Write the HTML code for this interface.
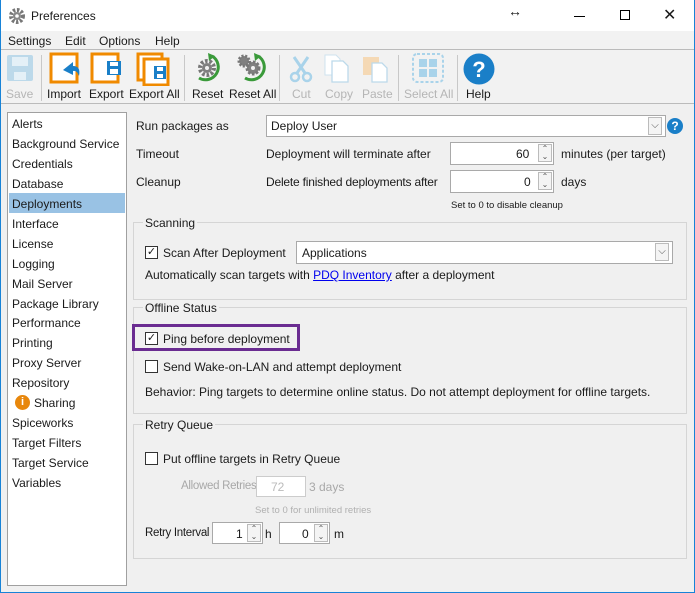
<!DOCTYPE html>
<html><head><meta charset="utf-8"><style>
*{margin:0;padding:0;box-sizing:border-box}
body{width:695px;height:593px;overflow:hidden;background:#f0f0f0;font:12px "Liberation Sans",sans-serif;color:#1a1a1a;position:relative}
.a{position:absolute;white-space:nowrap}
.win{position:absolute;left:0;top:0;width:695px;height:593px;border:1px solid #1883d7;border-top:none}
.tb{font-size:12px;text-align:center}
.dis{color:#b5b5b5}
.box{position:absolute;background:#fff;border:1px solid #a9a9a9}
.spin{position:absolute;width:14px;height:18px;border:1px solid #bbb;background:#f4f4f4;font-size:8px;line-height:8px;text-align:center;color:#555}
.cb{position:absolute;width:13px;height:13px;border:1px solid #333;background:#fff;font-size:11px;line-height:11px;text-align:center}
.grp{position:absolute;border:1px solid #d5d5d5}
.gl{position:absolute;background:#f0f0f0;padding:0 2px;top:-9px;left:9px}
.li{position:absolute;left:12px}
.sep{position:absolute;top:55px;width:1px;height:46px;background:#c8c8c8}
</style></head><body>
<div class="a" style="left:0;top:0;width:695px;height:31px;background:#fff"></div>
<svg class="a" style="left:8px;top:7px" width="18" height="18" viewBox="0 0 18 18"><circle cx="9" cy="9" r="6" fill="none" stroke="#777" stroke-width="4" stroke-dasharray="2.4 1.6"/><circle cx="9" cy="9" r="4" fill="#888"/><circle cx="9" cy="9" r="1.8" fill="#fff"/></svg>
<div class="a" style="left:31px;top:9px;font-size:12px">Preferences</div>
<div class="a" style="left:508px;top:3px;font-size:14px;font-weight:bold">↔</div>
<div class="a" style="left:574px;top:16px;width:11px;height:1px;background:#000"></div>
<div class="a" style="left:620px;top:10px;width:10px;height:10px;border:1px solid #000"></div>
<div class="a" style="left:663px;top:5px;font-size:16px">✕</div>
<div class="a" style="left:0;top:31px;width:695px;height:18px;background:#f2f2f2"></div>
<div class="a" style="left:8px;top:34px">Settings</div><div class="a" style="left:65px;top:34px">Edit</div><div class="a" style="left:99px;top:34px">Options</div><div class="a" style="left:155px;top:34px">Help</div>
<div class="a" style="left:0;top:49px;width:695px;height:1px;background:#bbb"></div>
<div class="a" style="left:0;top:103px;width:695px;height:1px;background:#bbb"></div>
<div class="a" style="left:0;top:50px;width:695px;height:53px;background:#f2f2f2"></div>
<svg class="a" style="left:6px;top:54px" width="28" height="28"><rect x="1" y="1" width="26" height="26" rx="2" fill="#bcd9ea"/><rect x="6" y="3" width="16" height="9" fill="#e4f0f7"/><rect x="8" y="18" width="12" height="8" fill="#e4f0f7"/></svg>
<div class="a tb dis" style="left:6px;top:87px">Save</div>
<div class="sep" style="left:41px"></div>
<svg class="a" style="left:49px;top:52px" width="34" height="32"><rect x="2" y="2" width="26" height="28" fill="#fff" stroke="#f08a00" stroke-width="3"/><path d="M14 18 L24 10 L24 14 Q32 14 30 24 Q28 18 24 19 L24 23 Z" fill="#1a7fc8"/></svg>
<div class="a tb" style="left:47px;top:87px">Import</div>
<svg class="a" style="left:90px;top:52px" width="34" height="32"><rect x="2" y="2" width="26" height="28" fill="#fff" stroke="#f08a00" stroke-width="3"/><rect x="17" y="9" width="14" height="14" fill="#1a7fc8"/><rect x="20" y="10" width="8" height="4" fill="#fff"/><rect x="20" y="17" width="8" height="5" fill="#fff"/></svg>
<div class="a tb" style="left:89px;top:87px">Export</div>
<svg class="a" style="left:136px;top:52px" width="36" height="34"><rect x="2" y="2" width="24" height="26" fill="#fff" stroke="#f08a00" stroke-width="3"/><rect x="8" y="7" width="24" height="26" fill="#fff" stroke="#f08a00" stroke-width="3"/><rect x="18" y="14" width="12" height="13" fill="#1a7fc8"/><rect x="21" y="15" width="6" height="4" fill="#fff"/><rect x="21" y="22" width="6" height="4" fill="#fff"/></svg>
<div class="a tb" style="left:129px;top:87px">Export All</div>
<div class="sep" style="left:184px"></div>
<svg class="a" style="left:194px;top:53px" width="28" height="30"><path d="M18 3 A12 12 0 1 1 5 25" fill="none" stroke="#3a9a3a" stroke-width="3"/><path d="M14 0 L21 3 L15 8 Z" fill="#3a9a3a"/><circle cx="13" cy="15" r="7" fill="none" stroke="#777" stroke-width="4" stroke-dasharray="2.6 1.8"/><circle cx="13" cy="15" r="5" fill="#808080"/><circle cx="13" cy="15" r="2" fill="#f2f2f2"/></svg>
<div class="a tb" style="left:192px;top:87px">Reset</div>
<svg class="a" style="left:234px;top:51px" width="36" height="32"><path d="M24 5 A12 12 0 1 1 11 27" fill="none" stroke="#3a9a3a" stroke-width="3"/><path d="M20 2 L27 5 L21 10 Z" fill="#3a9a3a"/><circle cx="10" cy="10" r="5" fill="#808080" stroke="#777" stroke-width="3" stroke-dasharray="2 1.5"/><circle cx="19" cy="17" r="6" fill="#808080" stroke="#777" stroke-width="3" stroke-dasharray="2.4 1.6"/><circle cx="19" cy="17" r="2" fill="#f2f2f2"/></svg>
<div class="a tb" style="left:229px;top:87px">Reset All</div>
<div class="sep" style="left:279px"></div>
<svg class="a" style="left:289px;top:55px" width="24" height="28"><path d="M5 2 L16 18 M19 2 L8 18" stroke="#a9d3ea" stroke-width="3"/><circle cx="6" cy="22" r="4" fill="none" stroke="#a9d3ea" stroke-width="2.5"/><circle cx="18" cy="22" r="4" fill="none" stroke="#a9d3ea" stroke-width="2.5"/></svg>
<div class="a tb dis" style="left:292px;top:87px">Cut</div>
<svg class="a" style="left:322px;top:53px" width="30" height="30"><path d="M3 2 H14 L18 6 V22 H3Z" fill="#fff" stroke="#cfe3ef"/><path d="M10 8 H21 L26 13 V29 H10Z" fill="#fff" stroke="#bcd9ea" stroke-width="1.3"/></svg>
<div class="a tb dis" style="left:325px;top:87px">Copy</div>
<svg class="a" style="left:361px;top:53px" width="30" height="30"><rect x="2" y="4" width="16" height="18" fill="#f5d9b5"/><path d="M11 10 H21 L26 15 V29 H11Z" fill="#fff" stroke="#bcd9ea" stroke-width="1.3"/></svg>
<div class="a tb dis" style="left:362px;top:87px">Paste</div>
<div class="sep" style="left:398px"></div>
<svg class="a" style="left:412px;top:53px" width="32" height="30"><rect x="1" y="1" width="30" height="28" rx="4" fill="none" stroke="#a9d3ea" stroke-width="2" stroke-dasharray="3 2"/><rect x="7" y="6" width="8" height="8" fill="#a9d3ea"/><rect x="17" y="6" width="8" height="8" fill="#a9d3ea"/><rect x="7" y="16" width="8" height="8" fill="#a9d3ea"/><rect x="17" y="16" width="8" height="8" fill="#a9d3ea"/></svg>
<div class="a tb dis" style="left:404px;top:87px">Select All</div>
<div class="sep" style="left:457px"></div>
<svg class="a" style="left:463px;top:53px" width="32" height="32"><circle cx="16" cy="16" r="15.5" fill="#1a7fc8"/><text x="16" y="24" font-family="Liberation Sans" font-weight="bold" font-size="22" fill="#fff" text-anchor="middle">?</text></svg>
<div class="a tb" style="left:466px;top:87px">Help</div>
<div class="a" style="left:7px;top:112px;width:120px;height:474px;background:#fff;border:1px solid #a0a0a0"></div>
<div class="a" style="left:9px;top:193px;width:116px;height:20px;background:#99c2e4"></div>
<div class="li a" style="top:117px">Alerts</div>
<div class="li a" style="top:137px">Background Service</div>
<div class="li a" style="top:157px">Credentials</div>
<div class="li a" style="top:177px">Database</div>
<div class="li a" style="top:197px">Deployments</div>
<div class="li a" style="top:217px">Interface</div>
<div class="li a" style="top:237px">License</div>
<div class="li a" style="top:257px">Logging</div>
<div class="li a" style="top:277px">Mail Server</div>
<div class="li a" style="top:297px">Package Library</div>
<div class="li a" style="top:316px">Performance</div>
<div class="li a" style="top:336px">Printing</div>
<div class="li a" style="top:356px">Proxy Server</div>
<div class="li a" style="top:376px">Repository</div>
<div class="a" style="left:15px;top:395px;width:15px;height:15px;border-radius:50%;background:#e8870c;color:#fff;font-weight:bold;font-size:11px;text-align:center;line-height:15px">i</div>
<div class="a" style="left:34px;top:396px">Sharing</div>
<div class="li a" style="top:416px">Spiceworks</div>
<div class="li a" style="top:436px">Target Filters</div>
<div class="li a" style="top:456px">Target Service</div>
<div class="li a" style="top:476px">Variables</div>
<div class="a" style="left:136px;top:119px">Run packages as</div>
<div class="box" style="left:266px;top:115px;width:400px;height:22px"></div>
<div class="a" style="left:271px;top:119px">Deploy User</div>
<div class="spin" style="left:648px;top:117px;height:18px;line-height:16px;font-size:10px">⌵</div>
<div class="a" style="left:667px;top:118px;width:16px;height:16px;border-radius:50%;background:#1a7fc8;color:#fff;font-weight:bold;font-size:12px;text-align:center;line-height:16px">?</div>
<div class="a" style="left:136px;top:147px">Timeout</div>
<div class="a" style="left:266px;top:147px">Deployment will terminate after</div>
<div class="box" style="left:450px;top:142px;width:104px;height:23px"></div>
<div class="a" style="left:516px;top:147px">60</div>
<div class="spin" style="left:538px;top:144px">⌃<br>⌄</div>
<div class="a" style="left:561px;top:147px">minutes (per target)</div>
<div class="a" style="left:136px;top:175px">Cleanup</div>
<div class="a" style="left:266px;top:175px;letter-spacing:-0.2px">Delete finished deployments after</div>
<div class="box" style="left:450px;top:170px;width:104px;height:23px"></div>
<div class="a" style="left:524px;top:175px">0</div>
<div class="spin" style="left:538px;top:172px">⌃<br>⌄</div>
<div class="a" style="left:561px;top:175px">days</div>
<div class="a" style="left:451px;top:200px;font-size:9.5px">Set to 0 to disable cleanup</div>
<div class="grp" style="left:133px;top:222px;width:554px;height:78px"><div class="gl" style="top:-7px">Scanning</div></div>
<div class="cb" style="left:145px;top:246px">✓</div>
<div class="a" style="left:163px;top:246px">Scan After Deployment</div>
<div class="box" style="left:296px;top:241px;width:377px;height:23px"></div>
<div class="a" style="left:302px;top:246px">Applications</div>
<div class="spin" style="left:655px;top:243px;line-height:16px;font-size:10px">⌵</div>
<div class="a" style="left:145px;top:268px">Automatically scan targets with <span style="color:#0000ee;text-decoration:underline">PDQ Inventory</span> after a deployment</div>
<div class="grp" style="left:133px;top:307px;width:554px;height:107px"><div class="gl" style="top:-7px">Offline Status</div></div>
<div class="a" style="left:132px;top:324px;width:168px;height:27px;border:3px solid #6a2c91"></div>
<div class="cb" style="left:145px;top:332px">✓</div>
<div class="a" style="left:163px;top:332px">Ping before deployment</div>
<div class="cb" style="left:145px;top:360px"></div>
<div class="a" style="left:163px;top:360px">Send Wake-on-LAN and attempt deployment</div>
<div class="a" style="left:145px;top:385px">Behavior: Ping targets to determine online status. Do not attempt deployment for offline targets.</div>
<div class="grp" style="left:133px;top:424px;width:554px;height:135px"><div class="gl" style="top:-7px">Retry Queue</div></div>
<div class="cb" style="left:145px;top:452px"></div>
<div class="a" style="left:163px;top:452px">Put offline targets in Retry Queue</div>
<div class="a" style="left:181px;top:480px;color:#a8a8a8;font-size:11.5px;letter-spacing:-0.3px">Allowed Retries</div>
<div class="box" style="left:256px;top:476px;width:50px;height:21px;border-color:#ccc"></div>
<div class="a" style="left:271px;top:480px;color:#bbb">72</div>
<div class="a" style="left:309px;top:480px;color:#a8a8a8">3 days</div>
<div class="a" style="left:255px;top:505px;font-size:9.5px;color:#b0b0b0">Set to 0 for unlimited retries</div>
<div class="a" style="left:145px;top:527px;font-size:11.5px;letter-spacing:-0.3px">Retry Interval</div>
<div class="box" style="left:212px;top:522px;width:51px;height:22px"></div>
<div class="a" style="left:236px;top:527px">1</div>
<div class="spin" style="left:247px;top:524px">⌃<br>⌄</div>
<div class="a" style="left:265px;top:527px">h</div>
<div class="box" style="left:279px;top:522px;width:51px;height:22px"></div>
<div class="a" style="left:302px;top:527px">0</div>
<div class="spin" style="left:314px;top:524px">⌃<br>⌄</div>
<div class="a" style="left:334px;top:527px">m</div>
<div class="win"></div>
</body></html>
